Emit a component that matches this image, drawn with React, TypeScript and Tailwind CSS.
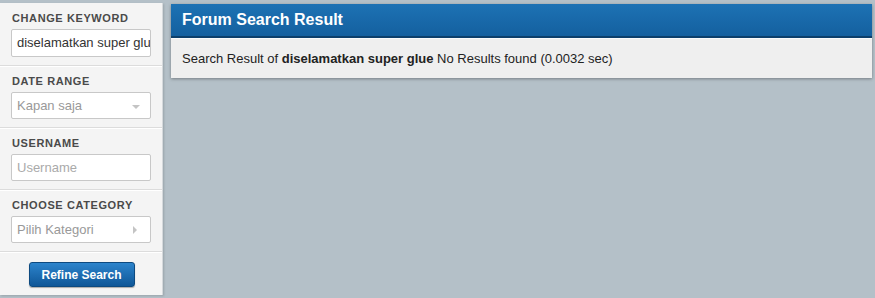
import React from 'react';

const font = { fontFamily: '"Liberation Sans", Arial, sans-serif' };

function Section({ label, children }: { label: string; children: React.ReactNode }) {
  return (
    <div className="px-[11px] pt-[9px] pb-[8px] border-b border-[#dcdcdc] shadow-[0_1px_0_#ffffff]">
      <div className="pl-[1px] text-[11px] leading-[13px] font-bold tracking-[0.6px] text-[#4a4a4a] mb-[4px]">{label}</div>
      {children}
    </div>
  );
}

export default function App() {
  return (
    <div style={font} className="w-[875px] h-[298px] bg-[#b4c0c8] flex items-start overflow-hidden">
      {/* Sidebar */}
      <aside className="w-[163px] h-[292px] mt-[3px] bg-[#f4f4f4] border-r border-[#d5d9dc] shadow-[1px_1px_2px_rgba(0,0,0,0.15)] flex flex-col shrink-0">
        <Section label="CHANGE KEYWORD">
          <div className="h-[28px] bg-white border border-[#c8c8c8] rounded-[2px] flex items-center pl-[5px] overflow-hidden whitespace-nowrap text-[13px] text-[#333]">
            <span className="whitespace-nowrap">diselamatkan super glue</span>
          </div>
        </Section>
        <Section label="DATE RANGE">
          <div className="h-[27px] bg-white border border-[#c8c8c8] rounded-[2px] flex items-center justify-between px-[5px] text-[13px] text-[#999]">
            <span>Kapan saja</span>
            <span className="w-0 h-0 border-l-[4px] border-r-[4px] border-t-[4px] border-l-transparent border-r-transparent border-t-[#c4c4c4] mr-[5px] mt-[2px]" />
          </div>
        </Section>
        <Section label="USERNAME">
          <div className="h-[27px] bg-white border border-[#c8c8c8] rounded-[2px] flex items-center px-[5px] text-[13px] text-[#aaa]">
            Username
          </div>
        </Section>
        <Section label="CHOOSE CATEGORY">
          <div className="h-[27px] bg-white border border-[#c8c8c8] rounded-[2px] flex items-center justify-between px-[5px] text-[13px] text-[#999]">
            <span>Pilih Kategori</span>
            <span className="w-0 h-0 border-t-[4px] border-b-[4px] border-l-[4px] border-t-transparent border-b-transparent border-l-[#c4c4c4] mr-[8px]" />
          </div>
        </Section>
        <div className="flex justify-center pt-[10px] pl-[1px]">
          <button className="w-[106px] h-[25px] rounded-[3px] border border-[#0d4a80] bg-gradient-to-b from-[#2c84cc] to-[#0f5798] text-white text-[12px] font-bold shadow-[0_1px_1px_rgba(0,0,0,0.3)]">
            Refine Search
          </button>
        </div>
      </aside>

      {/* Main panel */}
      <main className="flex-1 ml-[8px] mr-[3px] mt-[4px] shadow-[0_1px_3px_rgba(0,0,0,0.35)]">
        <div className="h-[34px] bg-gradient-to-b from-[#1d72b4] to-[#14609f] border-b-[2px] border-[#0c3f6b] flex items-center px-[11px]">
          <h1 className="text-[16px] text-white font-bold">Forum Search Result</h1>
        </div>
        <div className="h-[40px] bg-[#efefef] border-t border-[#fafafa] flex items-center px-[11px] text-[13px] text-[#222]">
          <span>
            Search Result of <b>diselamatkan super glue</b> No Results found (0.0032 sec)
          </span>
        </div>
      </main>
    </div>
  );
}
